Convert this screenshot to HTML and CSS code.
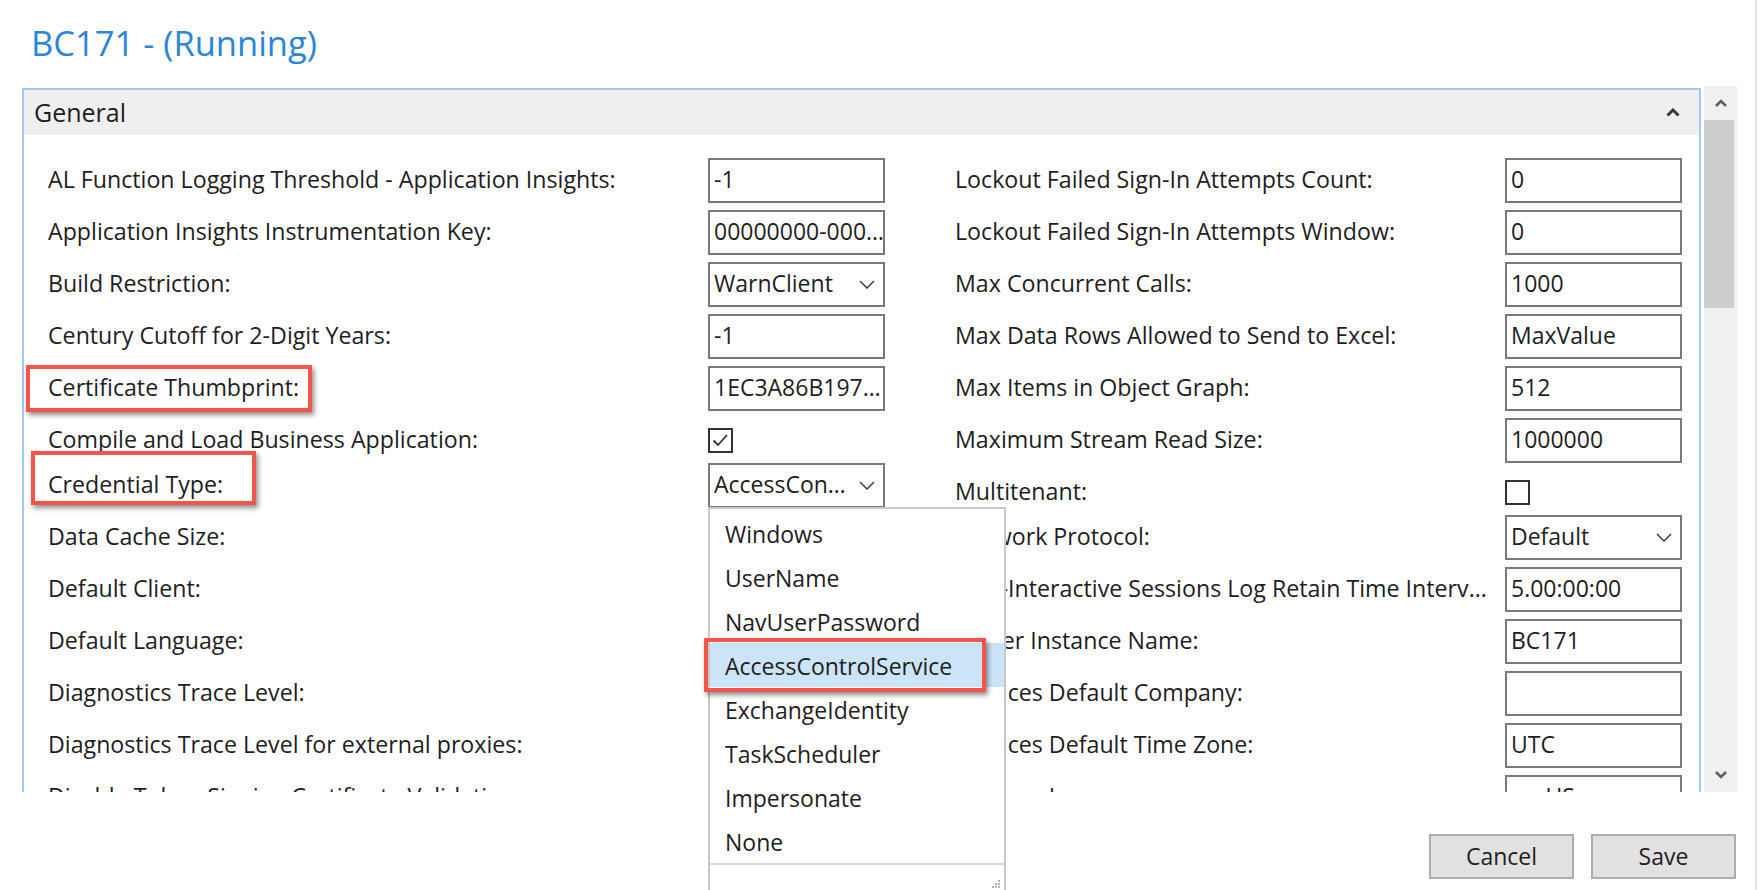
FILE: index.html
```html
<!DOCTYPE html>
<html lang="en">
<head>
    <meta charset="UTF-8">
    <meta name="viewport" content="width=device-width, initial-scale=1.0">
    <title>BC171 - (Running)</title>
    <link rel="stylesheet" href="styles.css">
</head>
<body>
    <div class="window">
        <h1 class="title">BC171 - (Running)</h1>

        <div class="main">
            <div class="viewport">
                <section class="panel">
                    <div class="panel-head">
                        <span>General</span>
                        <svg class="collapse" width="14" height="9" viewBox="0 0 14 9"><path d="M1.5 7.5 L7 2 L12.5 7.5" /></svg>
                    </div>

                    <div class="panel-body">
                        <!-- Columna izquierda -->
                        <div class="col col-left">
                            <div class="field"><label>AL Function Logging Threshold - Application Insights:</label><div class="input">-1</div></div>
                            <div class="field"><label>Application Insights Instrumentation Key:</label><div class="input">00000000-000…</div></div>
                            <div class="field"><label>Build Restriction:</label><div class="input combo"><span>WarnClient</span><svg width="16" height="9" viewBox="0 0 16 9"><path d="M1 1 L8 8 L15 1" /></svg></div></div>
                            <div class="field"><label>Century Cutoff for 2-Digit Years:</label><div class="input">-1</div></div>
                            <div class="field"><label>Certificate Thumbprint:</label><div class="input">1EC3A86B197…</div></div>
                            <div class="field check"><label>Compile and Load Business Application:</label><div class="control"><span class="checkbox"><svg width="21" height="21" viewBox="0 0 21 21"><path d="M3.5 10.5 L8 15 L17 5" /></svg></span></div></div>
                            <div class="field"><label>Credential Type:</label><div class="input combo"><span>AccessCon…</span><svg width="16" height="9" viewBox="0 0 16 9"><path d="M1 1 L8 8 L15 1" /></svg></div></div>
                            <div class="field"><label>Data Cache Size:</label><div class="input">9</div></div>
                            <div class="field"><label>Default Client:</label><div class="input">Web</div></div>
                            <div class="field"><label>Default Language:</label><div class="input"></div></div>
                            <div class="field"><label>Diagnostics Trace Level:</label><div class="input">Warning</div></div>
                            <div class="field"><label>Diagnostics Trace Level for external proxies:</label><div class="input">Warning</div></div>
                            <div class="field"><label>Disable Token-Signing Certificate Validation:</label><div class="input"></div></div>
                        </div>

                        <!-- Columna derecha -->
                        <div class="col col-right">
                            <div class="field"><label>Lockout Failed Sign-In Attempts Count:</label><div class="input">0</div></div>
                            <div class="field"><label>Lockout Failed Sign-In Attempts Window:</label><div class="input">0</div></div>
                            <div class="field"><label>Max Concurrent Calls:</label><div class="input">1000</div></div>
                            <div class="field"><label>Max Data Rows Allowed to Send to Excel:</label><div class="input">MaxValue</div></div>
                            <div class="field"><label>Max Items in Object Graph:</label><div class="input">512</div></div>
                            <div class="field"><label>Maximum Stream Read Size:</label><div class="input">1000000</div></div>
                            <div class="field check"><label>Multitenant:</label><div class="control"><span class="checkbox"></span></div></div>
                            <div class="field"><label>Network Protocol:</label><div class="input combo"><span>Default</span><svg width="16" height="9" viewBox="0 0 16 9"><path d="M1 1 L8 8 L15 1" /></svg></div></div>
                            <div class="field"><label>Non-Interactive Sessions Log Retain Time Interv…</label><div class="input">5.00:00:00</div></div>
                            <div class="field"><label>Server Instance Name:</label><div class="input">BC171</div></div>
                            <div class="field"><label>Services Default Company:</label><div class="input"></div></div>
                            <div class="field"><label>Services Default Time Zone:</label><div class="input">UTC</div></div>
                            <div class="field"><label>Services Language:</label><div class="input">en-US</div></div>
                        </div>
                    </div>
                </section>
            </div>

            <div class="scrollbar">
                <div class="sb-btn"><svg width="12" height="8" viewBox="0 0 12 8"><path d="M1 7 L6 2 L11 7" /></svg></div>
                <div class="thumb"></div>
                <div class="sb-btn sb-down"><svg width="12" height="8" viewBox="0 0 12 8"><path d="M1 1 L6 6 L11 1" /></svg></div>
            </div>
        </div>

        <div class="footer">
            <button type="button">Cancel</button>
            <button type="button">Save</button>
        </div>

        <!-- Lista desplegable abierta de Credential Type -->
        <div class="dropdown">
            <ul>
                <li>Windows</li>
                <li>UserName</li>
                <li>NavUserPassword</li>
                <li class="selected">AccessControlService</li>
                <li>ExchangeIdentity</li>
                <li>TaskScheduler</li>
                <li>Impersonate</li>
                <li>None</li>
            </ul>
            <div class="dropdown-foot">
                <svg class="grip" width="10" height="10" viewBox="0 0 10 10">
                    <rect x="7" y="1" width="2" height="2" />
                    <rect x="4" y="4" width="2" height="2" />
                    <rect x="7" y="4" width="2" height="2" />
                    <rect x="1" y="7" width="2" height="2" />
                    <rect x="4" y="7" width="2" height="2" />
                    <rect x="7" y="7" width="2" height="2" />
                </svg>
            </div>
        </div>

        <!-- Marcas rojas -->
        <div class="callout callout-cert"></div>
        <div class="callout callout-cred"></div>
        <div class="callout callout-acs"></div>
    </div>
</body>
</html>
```

FILE: styles.css
```css
body {
    margin: 0;
    background-color: #ffffff;
    font-family: "Segoe UI", "Open Sans", sans-serif;
    font-size: 23px;
    color: #1e1e1e;
}
.window {
    position: relative;
    box-sizing: border-box;
    width: 1757px;
    height: 890px;
    overflow: hidden;
    border-right: 2px solid #e3e3e3;
}
.title {
    margin: 0;
    padding: 20px 0 0 31px;
    font-size: 34.5px;
    font-weight: normal;
    line-height: 46px;
    color: #2a86d9;
}
.main {
    display: flex;
    margin-top: 20px;
    height: 706px;
}
.viewport {
    margin: 2px 0 0 22px;
    width: 1679px;
    height: 704px;
    overflow: hidden;
}
.panel {
    box-sizing: border-box;
    width: 1679px;
    border: 2px solid #9ec9f4;
    border-bottom: none;
}
.panel-head {
    display: flex;
    justify-content: space-between;
    align-items: center;
    height: 45px;
    padding: 0 19px 0 10px;
    background-color: #efefef;
    font-size: 25px;
}
.panel-head span {
    margin-bottom: 1px;
}
.collapse path {
    fill: none;
    stroke: #3a3a3a;
    stroke-width: 3;
}
.panel-body {
    display: flex;
    gap: 70px;
    padding: 23px 17px 0 24px;
}
.col-left {
    flex: 0 0 837px;
}
.col-right {
    flex: 1;
}
.field {
    display: flex;
    align-items: center;
    height: 45px;
    margin-bottom: 7px;
}
.field.check {
    margin-bottom: 0;
}
.field label {
    flex: 1;
    margin-bottom: 4px;
    font-size: 23.2px;
    white-space: nowrap;
    overflow: hidden;
}
.input {
    box-sizing: border-box;
    display: flex;
    align-items: center;
    width: 177px;
    height: 45px;
    padding: 0 4px 4px;
    border: 2px solid #7a7a7a;
    white-space: nowrap;
    overflow: hidden;
}
.combo {
    justify-content: space-between;
    padding-right: 8px;
}
.combo svg {
    margin-top: 4px;
}
.combo path {
    fill: none;
    stroke: #444444;
    stroke-width: 1.6;
}
.control {
    width: 177px;
}
.checkbox {
    box-sizing: border-box;
    display: block;
    width: 25px;
    height: 25px;
    border: 2px solid #333333;
}
.checkbox svg {
    display: block;
}
.checkbox path {
    fill: none;
    stroke: #333333;
    stroke-width: 1.8;
}
.scrollbar {
    display: flex;
    flex-direction: column;
    margin-left: 3px;
    width: 33px;
    height: 706px;
    background-color: #f0f0f0;
}
.sb-btn {
    display: flex;
    justify-content: center;
    align-items: center;
    height: 34px;
}
.sb-btn path {
    fill: none;
    stroke: #5f5f5f;
    stroke-width: 2.6;
}
.sb-down {
    margin-top: auto;
}
.thumb {
    height: 188px;
    margin-right: 3px;
    background-color: #cdcdcd;
}
.footer {
    display: flex;
    justify-content: flex-end;
    gap: 17px;
    margin-top: 42px;
    padding-right: 19px;
}
.footer button {
    box-sizing: border-box;
    width: 145px;
    height: 45px;
    padding-bottom: 3px;
    border: 2px solid #adadad;
    background-color: #e1e1e1;
    font-family: inherit;
    font-size: 23px;
    color: #1e1e1e;
}
.dropdown {
    position: absolute;
    left: 708px;
    top: 507px;
    box-sizing: border-box;
    width: 298px;
    height: 400px;
    border: 2px solid #c9c9c9;
    background-color: #ffffff;
}
.dropdown ul {
    margin: 0;
    padding: 2px 0 0;
    list-style: none;
    border-bottom: 2px solid #d9d9d9;
}
.dropdown li {
    height: 44px;
    line-height: 47px;
    padding-left: 15px;
    overflow: hidden;
}
.dropdown li.selected {
    background-color: #cce4f7;
}
.dropdown-foot {
    position: relative;
    height: 26px;
}
.grip {
    position: absolute;
    right: 3px;
    bottom: 2px;
    fill: #b5b5b5;
}
.callout {
    position: absolute;
    box-sizing: border-box;
    border: 4px solid #f2564a;
    box-shadow: 2px 3px 5px rgba(0, 0, 0, 0.45);
}
.callout-cert {
    left: 26px;
    top: 365px;
    width: 286px;
    height: 47px;
}
.callout-cred {
    left: 31px;
    top: 451px;
    width: 225px;
    height: 54px;
}
.callout-acs {
    left: 704px;
    top: 638px;
    width: 282px;
    height: 54px;
}
```
